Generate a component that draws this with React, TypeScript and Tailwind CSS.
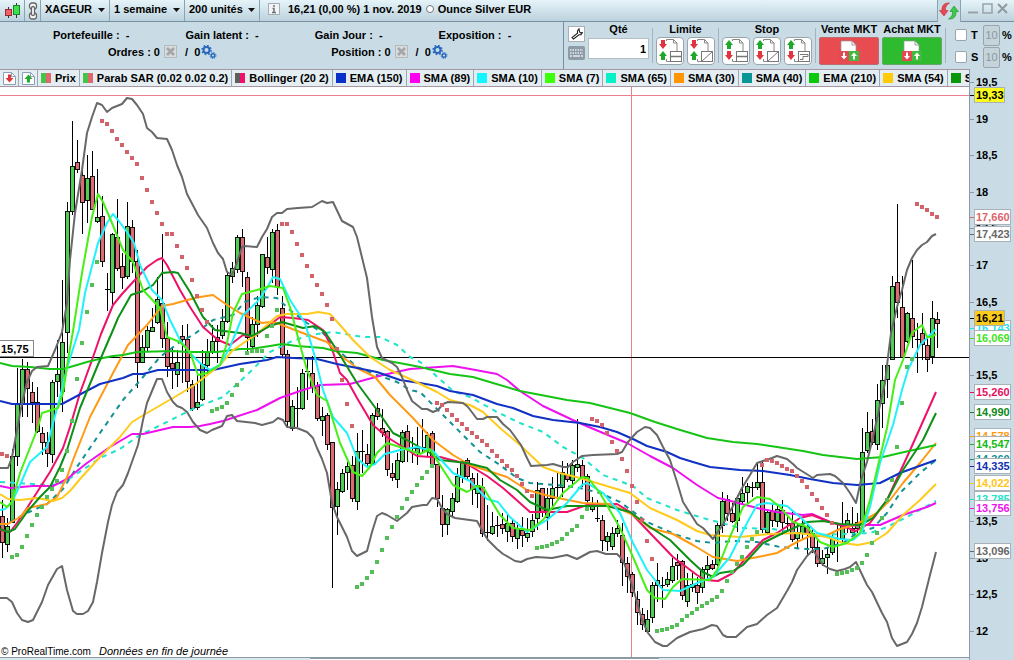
import { type ReactNode } from 'react';

type Candle = [number, number, number, number, 0 | 1];

const STEP = 5;

// high, body top, body bottom, low, rising
const CANDLES: Candle[] = [
  [500, 516, 542, 558, 0], [518, 526, 544, 552, 1], [449, 456, 522, 523, 1], [368, 403, 456, 466, 1],
  [359, 369, 404, 417, 1], [362, 369, 388, 417, 0], [382, 392, 402, 423, 0], [387, 402, 431, 433, 0],
  [427, 433, 442, 455, 0], [432, 442, 453, 467, 0], [380, 382, 454, 463, 1], [340, 374, 381, 397, 1],
  [280, 342, 391, 412, 1], [202, 211, 332, 353, 1], [121, 166, 211, 215, 1], [140, 162, 169, 173, 0],
  [170, 175, 202, 234, 0], [155, 178, 200, 223, 1], [151, 176, 209, 210, 0], [169, 217, 221, 223, 1],
  [196, 216, 261, 267, 0], [273, 289, 289, 311, 1], [233, 234, 292, 307, 1], [199, 237, 268, 271, 0],
  [253, 266, 277, 289, 0], [202, 226, 276, 279, 1], [220, 227, 261, 273, 0], [250, 261, 362, 388, 0],
  [335, 347, 362, 363, 1], [326, 330, 347, 351, 1], [308, 327, 331, 332, 1], [277, 299, 322, 324, 1],
  [234, 303, 338, 348, 0], [322, 338, 366, 377, 0], [347, 363, 368, 389, 0], [350, 362, 374, 387, 1],
  [325, 336, 339, 383, 0], [324, 339, 381, 392, 0], [380, 384, 408, 411, 0], [375, 402, 407, 410, 1],
  [350, 364, 399, 401, 1], [339, 352, 365, 376, 1], [325, 341, 351, 354, 1], [325, 337, 341, 363, 0],
  [309, 321, 335, 339, 1], [272, 275, 321, 323, 1], [262, 268, 276, 283, 1], [235, 237, 269, 273, 1],
  [229, 237, 271, 287, 0], [272, 277, 337, 351, 0], [317, 324, 346, 348, 1], [296, 305, 324, 337, 1],
  [254, 254, 306, 308, 1], [237, 257, 267, 274, 0], [229, 232, 269, 283, 1], [224, 230, 286, 295, 0],
  [296, 308, 354, 357, 0], [350, 354, 421, 428, 0], [400, 406, 428, 431, 1], [387, 408, 408, 427, 1],
  [369, 373, 408, 410, 1], [358, 371, 373, 400, 1], [356, 373, 387, 393, 0], [382, 386, 418, 421, 0],
  [407, 416, 420, 436, 1], [413, 415, 444, 450, 0], [442, 442, 507, 588, 0], [482, 489, 506, 535, 1],
  [469, 473, 491, 493, 1], [462, 466, 472, 490, 1], [456, 465, 498, 502, 0], [433, 451, 501, 510, 1],
  [430, 451, 451, 473, 1], [444, 454, 463, 468, 0], [413, 415, 463, 466, 1], [403, 408, 416, 420, 0],
  [409, 428, 432, 437, 0], [430, 431, 469, 476, 0], [463, 473, 477, 481, 0], [453, 460, 479, 488, 1],
  [430, 432, 461, 463, 1], [425, 431, 448, 462, 0], [437, 448, 450, 463, 0], [427, 448, 452, 465, 1],
  [419, 447, 447, 453, 1], [432, 435, 450, 456, 1], [431, 433, 464, 465, 0], [464, 464, 498, 507, 0],
  [495, 508, 524, 537, 0], [508, 509, 524, 535, 1], [493, 498, 511, 516, 1], [468, 476, 501, 503, 1],
  [461, 462, 477, 483, 1], [458, 460, 476, 480, 0], [473, 478, 489, 505, 0], [473, 485, 493, 508, 1],
  [478, 487, 533, 537, 0], [505, 532, 532, 541, 1], [512, 526, 533, 535, 1], [516, 525, 525, 537, 1],
  [513, 524, 528, 534, 0], [513, 523, 531, 542, 1], [520, 523, 536, 542, 0], [522, 528, 538, 549, 1],
  [517, 530, 535, 547, 0], [518, 533, 537, 542, 1], [514, 520, 531, 537, 1], [482, 490, 518, 530, 1],
  [488, 488, 512, 517, 0], [488, 498, 517, 530, 1], [477, 488, 498, 510, 1], [472, 487, 487, 497, 1],
  [461, 472, 487, 497, 1], [463, 475, 479, 482, 0], [460, 465, 480, 485, 1], [419, 464, 467, 472, 1],
  [460, 465, 478, 487, 0], [474, 476, 500, 507, 0], [497, 504, 509, 512, 1], [500, 518, 518, 522, 1],
  [515, 520, 540, 551, 0], [532, 536, 541, 551, 1], [527, 533, 546, 550, 1], [520, 528, 533, 537, 1],
  [523, 535, 562, 586, 0], [557, 563, 576, 593, 0], [572, 574, 592, 597, 0], [591, 599, 612, 625, 0],
  [608, 614, 624, 630, 0], [610, 619, 631, 633, 1], [582, 585, 617, 623, 1], [563, 580, 585, 602, 1],
  [577, 585, 585, 608, 1], [572, 579, 584, 587, 1], [558, 566, 580, 583, 1], [554, 562, 565, 580, 0],
  [560, 561, 595, 600, 0], [573, 585, 601, 607, 1], [573, 584, 587, 592, 1], [577, 585, 592, 604, 0],
  [567, 569, 587, 593, 1], [556, 565, 569, 578, 1], [560, 564, 568, 570, 0], [523, 525, 564, 566, 1],
  [492, 501, 525, 533, 1], [495, 499, 513, 521, 0], [503, 513, 521, 523, 0], [495, 498, 520, 532, 1],
  [477, 493, 501, 505, 1], [483, 486, 492, 503, 1], [482, 487, 487, 497, 1], [463, 482, 487, 490, 1],
  [460, 482, 529, 533, 0], [510, 512, 532, 534, 1], [503, 511, 520, 527, 0], [505, 509, 521, 527, 1],
  [500, 510, 522, 535, 0], [517, 523, 523, 532, 1], [510, 523, 539, 542, 0], [523, 532, 538, 548, 1],
  [520, 526, 533, 539, 1], [523, 526, 533, 555, 0], [528, 533, 547, 553, 0], [540, 547, 563, 567, 0],
  [550, 558, 563, 566, 1], [547, 554, 557, 574, 1], [533, 539, 552, 555, 1], [525, 538, 540, 562, 1],
  [502, 525, 538, 543, 1], [513, 520, 524, 533, 1], [507, 528, 532, 535, 0], [513, 522, 528, 533, 1],
  [428, 452, 523, 525, 1], [412, 432, 450, 453, 1], [419, 431, 442, 445, 0], [384, 400, 444, 450, 1],
  [365, 380, 403, 428, 1], [358, 365, 379, 398, 1], [276, 286, 359, 360, 1], [204, 282, 302, 318, 0],
  [276, 307, 357, 358, 0], [312, 313, 341, 343, 1], [260, 318, 336, 348, 0], [323, 339, 339, 373, 1],
  [313, 333, 344, 360, 0], [337, 345, 359, 372, 0], [301, 318, 356, 364, 1], [312, 319, 323, 348, 0],
];

interface Line {
  name: string;
  color: string;
  dashed?: boolean;
  points: string;
}

const LINES: Line[] = [
  {
    name: 'SMA 65', color: '#20e3c9', dashed: true,
    points: '0,482 33,484 50,485 63,483 87,467 100,458 120,449 140,435 167,422 197,407 223,397 250,372 270,352 290,342 310,335 333,332 363,337 380,337 397,345 410,357 420,362 433,373 453,391 470,397 497,412 520,423 543,432 563,447 583,458 603,475 633,486 647,498 677,510 703,518 740,528 773,529 797,533 817,535 847,534 870,533 887,527 907,517 936,501',
  },
  {
    name: 'SMA 40', color: '#149292', dashed: true,
    points: '0,525 10,522 27,513 47,504 63,489 77,467 100,433 123,400 143,377 160,357 180,342 193,335 213,320 233,315 245,302 260,297 277,298 290,310 307,323 323,333 340,352 357,367 377,375 397,382 410,390 420,392 440,412 460,432 480,452 500,465 517,478 530,483 567,486 580,488 600,493 620,502 647,522 677,535 697,541 713,543 733,541 757,542 780,547 807,549 823,549 843,543 857,533 873,528 887,513 900,493 920,473 936,460',
  },
  {
    name: 'SMA 89', color: '#ee10ee',
    points: '0,486 10,488 33,486 53,486 67,479 77,471 87,463 110,447 132,434 143,434 173,427 190,427 200,426 210,424 223,421 257,410 280,398 303,390 320,385 350,384 383,375 410,369 453,366 470,369 497,374 507,380 520,391 543,406 577,422 603,433 627,443 650,456 673,468 697,485 718,498 727,500 757,508 777,512 803,515 812,514 830,522 848,526 863,525 880,525 903,515 927,507 936,503',
  },
  {
    name: 'Bollinger mid', color: '#ee1168',
    points: '0,530 10,532 17,523 27,508 50,472 63,448 70,427 80,393 92,360 101,334 113,305 122,294 133,282 147,267 157,260 162,258 167,265 180,290 190,307 203,327 218,340 230,345 243,335 253,337 267,327 280,317 293,318 308,320 323,330 328,340 333,352 340,373 347,380 357,398 373,425 387,437 417,456 430,457 440,457 467,464 487,476 503,488 530,512 567,512 587,505 617,504 630,512 650,533 673,557 697,575 705,580 718,581 733,573 747,557 763,540 777,533 800,518 812,515 830,522 840,525 856,531 870,523 887,500 907,457 920,428 936,392',
  },
  {
    name: 'SMA 30', color: '#ff9a14',
    points: '0,524 8,524 20,517 28,508 47,504 57,497 67,477 73,460 90,417 113,373 128,345 147,325 162,306 173,304 187,300 200,297 213,295 227,305 240,313 262,323 270,322 277,323 300,332 327,342 340,355 357,368 375,377 390,395 413,418 433,440 453,455 470,465 507,477 527,490 553,497 583,503 610,504 633,515 650,528 673,534 693,545 713,557 737,561 763,556 777,553 797,542 810,536 825,536 840,529 857,524 877,513 890,500 903,483 920,463 936,443',
  },
  {
    name: 'EMA 150', color: '#1031c4',
    points: '0,401 12,404 62,404 77,396 100,384 123,378 133,374 143,374 158,370 213,370 240,364 267,360 277,357 293,358 317,359 337,364 357,368 377,372 400,380 420,383 437,386 450,391 473,395 497,404 513,408 533,416 553,420 580,423 600,427 617,432 633,439 647,446 667,452 680,458 693,462 710,467 740,470 763,471 790,475 810,479 833,483 857,485 880,483 900,473 936,460',
  },
  {
    name: 'EMA 210', color: '#16c416',
    points: '0,363 12,366 30,367 50,369 63,369 77,365 87,362 103,358 113,356 123,355 137,352 173,351 187,352 217,352 240,349 250,349 270,346 282,344 297,346 323,348 335,351 357,353 383,360 410,365 420,367 450,374 473,377 493,383 520,391 567,400 590,403 610,408 630,413 655,422 677,429 707,438 733,442 757,444 777,447 803,451 823,455 857,459 883,457 900,453 936,445',
  },
  {
    name: 'SMA 54', color: '#ffcb1c',
    points: '0,494 8,499 20,500 37,498 53,501 62,498 70,491 80,479 100,457 120,437 132,422 147,413 173,398 193,386 210,373 220,365 233,350 257,334 277,316 287,314 307,314 318,312 330,314 340,325 353,340 370,357 390,370 410,379 437,392 450,400 470,405 483,412 500,428 520,445 543,467 560,473 580,478 600,484 630,493 650,508 677,520 697,531 710,535 740,537 770,534 797,533 817,535 830,538 843,543 858,545 873,542 887,533 903,515 920,500 936,484',
  },
  {
    name: 'SMA 20', color: '#0d9016',
    points: '0,529 8,532 15,529 27,512 40,497 50,487 60,467 67,450 80,408 97,367 113,330 118,318 131,295 143,291 153,285 162,273 173,272 178,273 190,292 203,317 215,330 240,333 252,336 270,326 282,322 303,328 315,326 325,332 340,355 357,383 377,410 393,433 407,440 430,453 440,460 467,463 487,468 500,480 517,490 530,502 547,510 567,506 607,506 630,512 650,527 670,540 690,560 703,572 713,577 720,573 733,571 743,565 763,543 783,533 807,522 823,521 840,524 860,525 873,518 887,500 903,470 923,440 936,413',
  },
  {
    name: 'SMA 10', color: '#20f2fb',
    points: '0,510 5,509 12,502 20,485 30,462 47,447 52,427 58,405 67,368 79,330 85,293 98,243 107,223 113,214 118,220 127,232 134,243 140,265 152,290 162,300 170,320 180,340 190,353 200,363 210,370 220,365 230,347 243,315 257,302 267,288 273,277 280,279 290,300 305,323 315,357 323,390 333,417 347,433 357,458 367,467 375,464 385,454 400,450 417,447 433,451 453,473 470,481 487,499 498,502 510,517 527,532 547,520 567,503 582,485 587,483 603,493 620,513 633,543 647,570 663,590 680,591 697,583 713,577 730,557 747,523 757,505 767,503 787,506 800,517 817,533 840,539 853,540 862,532 870,507 880,463 893,425 902,390 908,370 920,345 936,329',
  },
  {
    name: 'SMA 7', color: '#46f016',
    points: '0,502 7,507 12,502 20,473 37,430 42,413 58,408 63,393 68,360 73,331 82,273 92,217 98,194 103,202 112,223 123,250 133,262 143,290 160,308 167,337 180,342 190,352 198,375 207,373 220,365 227,343 233,313 242,294 257,290 270,286 283,288 290,307 300,345 307,370 317,395 327,401 340,443 353,472 362,476 370,467 377,453 387,443 403,448 420,454 430,449 440,465 453,485 467,492 477,486 483,487 500,515 513,528 530,530 543,520 563,493 582,477 588,478 600,493 620,528 633,557 647,590 655,598 665,599 673,587 682,579 710,580 717,570 730,537 743,507 757,497 770,499 780,507 793,522 807,527 820,542 833,547 847,543 860,533 870,500 880,457 887,428 895,380 903,360 912,333 922,325 927,337 932,337 936,334',
  },
  {
    name: 'Bollinger high', color: '#686868',
    points: '0,468 8,468 12,457 17,430 22,403 27,382 32,371 37,367 48,366 55,350 62,332 67,303 70,260 75,213 82,170 87,133 92,117 97,103 102,105 107,112 112,108 122,104 127,98 132,99 137,105 143,114 147,128 152,132 157,138 167,139 172,150 177,165 182,177 187,194 198,215 207,228 213,243 218,253 223,259 227,272 232,275 236,265 242,247 245,246 257,247 262,237 267,229 272,217 277,213 282,213 287,209 298,208 312,207 322,201 327,203 333,202 342,221 353,227 357,237 367,278 372,317 377,347 382,358 392,363 397,367 402,377 407,390 412,401 422,409 427,409 433,412 438,410 443,404 448,402 463,403 468,407 477,419 483,419 487,417 497,417 503,424 510,430 521,445 527,458 531,466 547,465 553,464 563,467 568,467 573,462 582,456 593,455 617,454 622,452 628,442 637,432 645,427 650,428 657,435 663,447 670,460 677,482 683,502 690,513 697,524 703,528 713,539 717,533 722,526 727,517 733,506 742,488 750,475 757,463 763,461 772,458 777,456 787,459 793,464 797,468 813,478 817,475 830,474 835,476 843,483 850,493 856,503 861,480 867,462 873,437 880,405 885,383 888,357 891,333 897,307 902,290 907,270 912,258 917,250 922,245 927,242 932,236 936,234',
  },
  {
    name: 'Bollinger low', color: '#686868',
    points: '0,598 7,598 12,602 17,613 22,620 28,622 33,620 42,602 48,585 57,569 62,566 67,590 73,611 77,614 83,614 88,611 93,602 97,582 102,553 108,522 112,505 117,492 123,485 128,473 138,445 143,420 147,403 157,379 162,379 167,392 173,402 177,406 182,408 187,412 193,422 200,430 207,433 212,430 222,426 227,416 232,415 237,421 255,423 262,425 273,422 278,418 283,420 287,427 297,428 307,432 313,438 317,448 322,459 327,473 332,503 337,517 347,537 352,551 357,556 367,551 372,532 377,516 382,513 387,515 397,521 407,513 412,507 423,505 427,505 432,498 437,499 442,508 447,514 455,518 477,521 483,532 488,540 497,549 503,554 510,558 515,561 521,562 527,559 536,557 552,558 567,555 577,559 590,552 597,551 606,554 617,554 620,557 624,563 631,582 635,595 642,620 648,633 655,642 663,646 667,646 677,638 690,632 703,629 712,625 717,626 723,635 727,637 736,637 747,627 757,624 767,615 777,608 787,591 792,582 797,570 807,556 813,550 818,558 823,565 830,569 837,571 845,569 850,567 856,562 867,585 872,592 882,613 887,622 892,638 897,646 907,642 912,634 917,623 922,607 930,575 936,552',
  },
];

const RED = '#d2636b';
const GREEN = '#54bf57';

// Parabolic SAR runs: first x, then one value per bar
const SAR: { x: number; color: string; ys: number[] }[] = [
  { x: 2, color: RED, ys: [454, 456] },
  { x: 12, color: GREEN, ys: [557, 555, 547, 536, 525, 515, 507, 497, 489, 481, 470, 451, 421, 379, 343, 312, 285, 262] },
  { x: 102, color: RED, ys: [121, 124, 131, 139, 145, 152, 158, 164, 178, 190, 202, 213, 224, 234, 234, 246, 257, 268, 280, 296, 310, 322] },
  { x: 212, color: GREEN, ys: [411, 409, 407, 403, 395, 385, 370, 353, 351, 351, 351, 336, 326, 310] },
  { x: 282, color: RED, ys: [224, 224, 232, 244, 255, 266, 276, 285, 294, 305, 319, 349, 380, 404, 426] },
  { x: 357, color: GREEN, ys: [587, 584, 578, 572, 562, 550, 538, 527, 517, 508, 499, 492, 485, 478, 472, 466] },
  { x: 437, color: RED, ys: [403, 405, 410, 415, 420, 424, 429, 433, 437, 441, 445, 451, 456, 461, 466, 470, 476, 484, 491, 496] },
  { x: 537, color: GREEN, ys: [548, 547, 546, 544, 542, 539, 534, 530, 526, 517, 509] },
  { x: 592, color: RED, ys: [419, 421, 425, 433, 442, 451, 459, 471, 486, 502, 520, 541, 559] },
  { x: 657, color: GREEN, ys: [631, 630, 629, 627, 625, 620, 616, 613, 609, 606, 603, 600, 597, 591, 581, 572, 564, 557, 547, 539, 532] },
  { x: 762, color: RED, ys: [465, 460, 461, 463, 466, 469, 471, 476, 481, 487, 494, 500, 508, 515, 523] },
  { x: 837, color: GREEN, ys: [574, 573, 572, 570, 568, 563, 555, 543, 533, 518, 500, 480, 447, 403, 367, 359] },
  { x: 917, color: RED, ys: [204, 207, 210, 214, 217] },
];

const SCALE: [string, number][] = [
  ['19,5', 82], ['19', 119], ['18,5', 155], ['18', 192], ['17,5', 228], ['17', 265],
  ['16,5', 302], ['15,5', 375], ['13,5', 521], ['13', 558], ['12,5', 594], ['12', 631],
];

// text, y, text colour, fill
const TAGS: [string, number, string, string][] = [
  ['17,660', 217, '#d8666d', '#ffffff'],
  ['17,423', 234, '#686868', '#ffffff'],
  ['16,143', 328, '#20e6f2', '#ffffff'],
  ['16,069', 338, '#42e31c', '#ffffff'],
  ['15,260', 392, '#e4105f', '#ffffff'],
  ['14,990', 412, '#108a18', '#ffffff'],
  ['14,578', 436, '#ff9a14', '#ffffff'],
  ['14,547', 444, '#16b816', '#ffffff'],
  ['14,360', 459, '#149292', '#ffffff'],
  ['14,335', 466, '#1031b4', '#ffffff'],
  ['14,022', 483, '#ffc61c', '#ffffff'],
  ['13,785', 499, '#20e3c9', '#ffffff'],
  ['13,756', 508, '#ee10ee', '#ffffff'],
  ['13,096', 551, '#686868', '#ffffff'],
  ['19,33', 95, '#000000', '#fbfb1e'],
  ['16,21', 318, '#000000', '#fdcb1c'],
];

const INDICATORS: { label: string; colors: [string, string] }[] = [
  { label: 'Prix', colors: ['#46c447', '#e0676b'] },
  { label: 'Parab SAR (0.02 0.02 0.2)', colors: ['#46c447', '#e0676b'] },
  { label: 'Bollinger (20 2)', colors: ['#5e5e5e', '#f0106a'] },
  { label: 'EMA (150)', colors: ['#0a30c8', '#0a30c8'] },
  { label: 'SMA (89)', colors: ['#ff00f0', '#ff00f0'] },
  { label: 'SMA (10)', colors: ['#14f5ff', '#14f5ff'] },
  { label: 'SMA (7)', colors: ['#3cff0a', '#3cff0a'] },
  { label: 'SMA (65)', colors: ['#0af0c8', '#0af0c8'] },
  { label: 'SMA (30)', colors: ['#ff9600', '#ff9600'] },
  { label: 'SMA (40)', colors: ['#0a9696', '#0a9696'] },
  { label: 'EMA (210)', colors: ['#0ac80a', '#0ac80a'] },
  { label: 'SMA (54)', colors: ['#ffcb05', '#ffcb05'] },
  { label: 'SMA (20)', colors: ['#0a960a', '#0a960a'] },
];

function Dropdown({ label, value }: { label: string; value: string }) {
  return (
    <div className="relative flex h-full items-center border-r border-[#8aa3b2] pb-1">
      <select aria-label={label} className="appearance-none bg-transparent pl-1 pr-4 font-bold outline-none">
        <option>{value}</option>
      </select>
      <svg className="pointer-events-none absolute right-1 top-2" width="7" height="4" viewBox="0 0 7 4">
        <path d="M0 0h7L3.5 4z" fill="#111" />
      </svg>
    </div>
  );
}

function TitleBar() {
  return (
    <header className="flex h-[22px] items-stretch border-b border-[#7490a2] bg-linear-to-b from-[#e6f4f9] to-[#bcd2dd]">
      <button aria-label="Style du graphique" className="flex w-[25px] items-center justify-center border-r border-[#8aa3b2]">
        <svg width="17" height="16" viewBox="0 0 17 16">
          <path d="M4.5 4v11M12.5 0v15" stroke="#333" />
          <rect x="1.5" y="6.5" width="6" height="6" fill="#f0616a" stroke="#9b2a30" />
          <rect x="9.5" y="2.5" width="6" height="9" fill="#3fe04c" stroke="#1d8528" />
        </svg>
      </button>
      <button aria-label="Lier" className="flex w-4 items-center justify-center border-r border-[#8aa3b2]">
        <svg width="10" height="18" viewBox="0 0 10 18" fill="none" stroke="#666" strokeWidth="1.3">
          <rect x="1.5" y="1" width="7" height="6" rx="2.5" fill="#f4f7f8" />
          <rect x="1.5" y="11" width="7" height="6" rx="2.5" fill="#f4f7f8" />
          <rect x="3.5" y="4.5" width="3" height="9" rx="1.5" fill="#fff" />
        </svg>
      </button>
      <Dropdown label="Valeur" value="XAGEUR" />
      <Dropdown label="Unité de temps" value="1 semaine" />
      <Dropdown label="Historique" value="200 unités" />
      <div className="flex flex-1 items-center gap-2 pb-1 pl-2">
        <svg width="12" height="12" viewBox="0 0 12 12">
          <rect x=".5" y=".5" width="11" height="11" fill="#f2f4f5" stroke="#a5adb2" />
          <path d="M6 2v2M4.5 5.5H6V9M4 9.5h4" stroke="#6d7478" strokeWidth="1.5" fill="none" />
        </svg>
        <span className="flex items-center gap-1">
          <span>16,21 (0,00 %) 1 nov. 2019</span>
          <span className="size-2 rounded-full border border-[#777] bg-white" />
          <span>Ounce Silver EUR</span>
        </span>
      </div>
      <button aria-label="Actualiser" className="-mb-px flex w-6 items-center justify-center border-x border-[#8aa3b2] bg-[#c9dce6]">
        <svg width="20" height="18" viewBox="0 0 20 18">
          <path d="M10.500 1C5 .5 2.500 4 3 8.500H.5L5 14l4-5.500H6.500C6 5 7.500 3 10.500 1z" fill="#e8474f" stroke="#b53138" strokeWidth=".6" />
          <path d="M9.500 17c5.500.5 8-3 7.500-7.500h2.500L15 4l-4 5.500h2.500c.5 3.500-1 5.500-4 7.500z" fill="#3ccb46" stroke="#24882c" strokeWidth=".6" />
        </svg>
      </button>
      <div className="flex w-[53px] items-center justify-around px-1 pb-1">
        <button aria-label="Réduire">
          <svg width="11" height="11"><path d="M1 9.5h10" stroke="#98a2a8" strokeWidth="2" /></svg>
        </button>
        <button aria-label="Agrandir">
          <svg width="11" height="11"><rect x="1" y="1" width="9" height="9" fill="none" stroke="#98a2a8" strokeWidth="1.5" /></svg>
        </button>
        <button aria-label="Fermer">
          <svg width="11" height="11"><path d="M1 1l9 9M10 1l-9 9" stroke="#8f999f" strokeWidth="2" /></svg>
        </button>
      </div>
    </header>
  );
}

function CancelIcon() {
  return (
    <svg width="13" height="13" viewBox="0 0 13 13">
      <rect x=".5" y=".5" width="12" height="12" fill="#d8dcde" stroke="#b5babd" />
      <path d="M3 3l7 7M10 3l-7 7" stroke="#a4a6a7" strokeWidth="2.8" />
    </svg>
  );
}

function GearsIcon() {
  return (
    <svg width="16" height="14" viewBox="0 0 16 14" fill="none" stroke="#2767bd">
      <circle cx="5.5" cy="5" r="3" strokeWidth="2" />
      <circle cx="5.5" cy="5" r="4.500" strokeWidth="1.5" strokeDasharray="1.7 1.834" />
      <circle cx="12" cy="10.5" r="1.8" strokeWidth="1.4" />
      <circle cx="12" cy="10.5" r="3" strokeWidth="1" strokeDasharray="1.2 1.156" />
    </svg>
  );
}

function OrderCount({ label }: { label: string }) {
  return (
    <div className="flex items-center">
      <span>{label} : 0</span>
      <button aria-label={`Annuler ${label}`} className="ml-1"><CancelIcon /></button>
      <span className="ml-2">/ &nbsp;0</span>
      <button aria-label={`Réglages ${label}`} className="ml-px"><GearsIcon /></button>
    </div>
  );
}

function OrderIcon({ sell, kind }: { sell: boolean; kind: 'bar' | 'slash' | 'trail' }) {
  const top = sell ? '#e03440' : '#1fa82c';
  const bottom = sell ? '#1fa82c' : '#e03440';
  return (
    <svg width="24" height="24" viewBox="0 0 24 24" fill="none">
      <path d="M8.5 2V.5h7L19 4v8M15.5.5V4H19M8.5 20v2.5H13" stroke="#888" />
      {sell ? (
        <>
          <path d="M3 1h4v4h2l-4 5-4-5h2z" fill={top} />
          <path d="M5 12l4 5H7v4H3v-4H1z" fill={bottom} />
        </>
      ) : (
        <>
          <path d="M5 1l4 5H7v4H3V6H1z" fill={top} />
          <path d="M3 12h4v4h2l-4 5-4-5h2z" fill={bottom} />
        </>
      )}
      <rect x="12.5" y="12.5" width="11" height="10" fill="#fff" stroke="#777" />
      {kind === 'bar' && <path d="M12 17.5h12" stroke="#777" strokeWidth="1.5" />}
      {kind === 'slash' && <path d="M13 22L23 13" stroke="#777" />}
      {kind === 'trail' && <path d="M14 15.5h8v2h-5v3h-3" stroke="#777" />}
    </svg>
  );
}

function OrderButton({ label, sell, kind }: { label: string; sell: boolean; kind: 'bar' | 'slash' | 'trail' }) {
  return (
    <button aria-label={label} className="flex size-7 items-center justify-center rounded-sm border border-[#9aa4aa] bg-white">
      <OrderIcon sell={sell} kind={kind} />
    </button>
  );
}

function OrderGroup({ title, children }: { title: string; children: ReactNode }) {
  return (
    <div className="flex flex-col items-center">
      <span className="h-[15px] leading-[15px]">{title}</span>
      <div className="flex gap-[3px]">{children}</div>
    </div>
  );
}

function MarketIcon() {
  return (
    <svg width="20" height="22" viewBox="0 0 20 22">
      <path d="M2 1h11l4 4v7H2z" fill="#fff" stroke="#9a9a9a" strokeWidth=".7" />
      <path d="M13 1v4h4" fill="none" stroke="#9a9a9a" />
      <rect x="0" y="11" width="10" height="10" fill="#e04a50" />
      <rect x="10" y="11" width="10" height="10" fill="#3fbb3f" />
      <path d="M4 12.5h2V16h2l-3 3.5L2 16h2zM14 19.5h2V16h2l-3-3.5-3 3.5h2z" fill="#fff" />
    </svg>
  );
}

function Separator() {
  return <span className="my-1.5 w-px bg-[#a3b4be]" />;
}

function PercentRow({ label }: { label: string }) {
  return (
    <div className="flex h-[22px] items-center">
      <input id={`chk-${label}`} type="checkbox" className="size-3 appearance-none rounded-xs border border-[#98a5ad] bg-white" />
      <label htmlFor={`chk-${label}`} className="w-4 pl-1">{label}</label>
      <input aria-label={`${label} %`} defaultValue="10" className="h-[21px] w-[17px] rounded-xs border border-[#98a5ad] bg-[#c5d3db] text-center font-normal text-[#8b989f]" />
      <span className="pl-0.5">%</span>
    </div>
  );
}

function TradingBar() {
  return (
    <section className="flex h-[47px] bg-[#c9dce6]">
      <div className="flex flex-1 flex-col border-r border-[#7490a2] pt-1">
        <div className="flex h-[17px] items-center gap-14 pl-[53px]">
          <span>Portefeuille : &nbsp;-</span>
          <span>Gain latent : &nbsp;-</span>
          <span>Gain Jour : &nbsp;-</span>
          <span>Exposition : &nbsp;-</span>
        </div>
        <div className="flex h-[17px] items-center gap-[114px] pl-[108px]">
          <OrderCount label="Ordres" />
          <OrderCount label="Position" />
        </div>
      </div>
      <div className="flex gap-[3px] pl-1">
        <div className="flex flex-col gap-1 pt-1">
          <button aria-label="Options" className="flex h-4 w-[17px] items-center justify-center border border-[#a6b1b8] bg-white">
            <svg width="12" height="12" viewBox="0 0 12 12" fill="#fff" stroke="#222" strokeWidth="1.1">
              <path d="M8 .8L6.500 3v2.200L1 9.500 2.500 11 8 6.800h2l1.300-2.200-1.800.3L8.600 4z" />
            </svg>
          </button>
          <button aria-label="Clavier" className="flex h-[14px] w-[17px] items-center justify-center rounded-xs bg-[#8c9ba5]">
            <svg width="13" height="8" viewBox="0 0 13 8" stroke="#e5ebee" strokeWidth="1.5">
              <path d="M0 1h13M0 4h13" strokeDasharray="1.5 1" />
              <path d="M0 7h2M3 7h7M11 7h2" />
            </svg>
          </button>
        </div>
        <div className="flex flex-col items-center">
          <label htmlFor="qty" className="h-4 leading-[15px]">Qté</label>
          <input id="qty" defaultValue="1" className="h-[21px] w-[61px] border border-[#b3bec5] bg-white pr-0.5 text-right font-bold" />
        </div>
        <Separator />
        <OrderGroup title="Limite">
          <OrderButton label="Limite simple" sell kind="bar" />
          <OrderButton label="Limite oblique" sell kind="slash" />
        </OrderGroup>
        <Separator />
        <OrderGroup title="Stop">
          <OrderButton label="Stop simple" sell={false} kind="bar" />
          <OrderButton label="Stop oblique" sell={false} kind="slash" />
          <OrderButton label="Stop suiveur" sell={false} kind="trail" />
        </OrderGroup>
        <Separator />
        <OrderGroup title="Vente MKT">
          <button aria-label="Vente MKT" className="flex h-7 w-15 items-center justify-center rounded-xs border border-[#b96d70] bg-[#e84c50]"><MarketIcon /></button>
        </OrderGroup>
        <OrderGroup title="Achat MKT">
          <button aria-label="Achat MKT" className="flex h-7 w-15 items-center justify-center rounded-xs border border-[#6aa56a] bg-[#2fbb30]"><MarketIcon /></button>
        </OrderGroup>
        <Separator />
        <div className="flex w-[65px] flex-col pl-1.5 pt-0.5">
          <PercentRow label="T" />
          <PercentRow label="S" />
        </div>
      </div>
    </section>
  );
}

function ArrowBox({ down }: { down?: boolean }) {
  return (
    <svg width="13" height="13" viewBox="0 0 13 13">
      <path d="M.5.5h8l4 4v8H.5z" fill="#fff" stroke="#8ba0b8" />
      <path d="M8.5.5v4h4" fill="none" stroke="#8ba0b8" />
      {down ? <path d="M5 2.5h3V6h2.5l-4 4.500-4-4.500H5z" fill="#e0343c" /> : <path d="M5 10.5h3V7h2.5l-4-4.500-4 4.500H5z" fill="#24ab2e" />}
    </svg>
  );
}

function Legend() {
  return (
    <div className="flex h-[18px] min-w-0 items-stretch overflow-hidden whitespace-nowrap border-b border-t border-[#a895a4] bg-[#e3edf2]">
      <button aria-label="Vendre" className="flex w-[19px] shrink-0 items-center justify-center border-r border-[#9aa9b3]"><ArrowBox down /></button>
      <button aria-label="Acheter" className="flex w-[19px] shrink-0 items-center justify-center border-r border-[#9aa9b3]"><ArrowBox /></button>
      {INDICATORS.map((item) => (
        <button key={item.label} className="flex shrink-0 items-center gap-1 border-r border-[#9aa9b3] px-[3px] font-bold">
          <svg width="10" height="10">
            <rect width="5" height="10" fill={item.colors[0]} />
            <rect x="5" width="5" height="10" fill={item.colors[1]} />
          </svg>
          {item.label}
        </button>
      ))}
    </div>
  );
}

function PriceChart() {
  return (
    <svg className="block w-full bg-white" viewBox="0 87 969 570" role="img" aria-label="Ounce Silver EUR">
      <path d="M0 95.5H969M631.5 87V657" stroke="#e8808e" shapeRendering="crispEdges" />
      <g shapeRendering="crispEdges">
        {CANDLES.map(([high, top, bottom, low, up], i) => {
          const x = 2 + i * STEP;
          return (
            <g key={x}>
              <path d={`M${x + 0.5} ${high}V${low}`} stroke="#000" />
              {bottom - top < 3 ? (
                <path d={`M${x - 2} ${top + 0.5}h5`} stroke="#000" />
              ) : (
                <rect x={x - 1.5} y={top + 0.5} width="4" height={bottom - top} fill={up ? '#53cc56' : '#dc6b72'} stroke="#111" />
              )}
            </g>
          );
        })}
      </g>
      <path d="M0 357.5H969" stroke="#000" />
      {LINES.map((line) => (
        <polyline
          key={line.name}
          points={line.points}
          fill="none"
          stroke={line.color}
          strokeWidth="2"
          strokeLinejoin="round"
          strokeDasharray={line.dashed ? '5 5' : undefined}
        />
      ))}
      {SAR.map((run) => (
        <g key={run.x} fill={run.color} shapeRendering="crispEdges">
          {run.ys.map((y, i) => (
            <rect key={i} x={run.x - 2 + i * STEP} y={y - 2} width="4" height="4" />
          ))}
        </g>
      ))}
      <rect x="-.5" y="340.5" width="34" height="16" fill="#fff" stroke="#888" />
      <text x="1" y="353" className="text-[11px] font-bold">15,75</text>
      <text x="1" y="655" className="text-[10px] font-normal">© ProRealTime.com</text>
      <text x="99" y="655" className="text-[11px] font-normal italic">Données en fin de journée</text>
    </svg>
  );
}

function PriceScale() {
  return (
    <svg className="block w-full" viewBox="0 69 45 591">
      <path d="M.5 69V660" stroke="#8b9ba6" />
      {SCALE.map(([text, y]) => (
        <g key={text}>
          <path d={`M1 ${y + 0.5}h4`} stroke="#8b9ba6" />
          <text x="7" y={y + 4} className="text-[11px] font-bold">{text}</text>
        </g>
      ))}
      {TAGS.map(([text, y, color, fill]) => (
        <g key={text}>
          <path d={`M1 ${y + 0.5}h4`} stroke={color} />
          <rect x="5.5" y={y - 7.5} width={text.length > 5 ? 36 : 30} height="15" fill={fill} stroke="#a8b2b8" />
          <text x="7" y={y + 4} fill={color} className="text-[11px] font-bold">{text}</text>
        </g>
      ))}
    </svg>
  );
}

export default function App() {
  return (
    <div className="min-h-screen overflow-hidden bg-[#c9dce6] font-['Liberation_Sans',Arial,sans-serif] text-[11px] font-bold leading-[14px] text-black">
      <TitleBar />
      <TradingBar />
      <main className="flex items-start">
        <div className="flex min-w-0 flex-1 flex-col">
          <Legend />
          <PriceChart />
          <div className="flex h-[3px] border-t border-[#8b9ba6] bg-[#dbe8ee]">
            <span className="ml-[32%] w-[36%] border-t border-[#8b9ba6] bg-white" />
          </div>
        </div>
        <aside className="w-[45px] shrink-0">
          <PriceScale />
        </aside>
      </main>
    </div>
  );
}
